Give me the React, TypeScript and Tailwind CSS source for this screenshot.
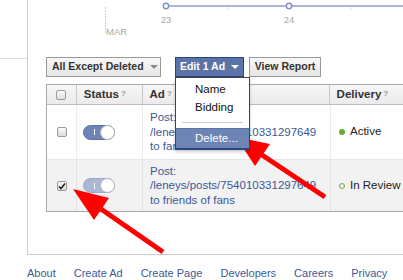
const font = { fontFamily: '"Liberation Sans", Arial, sans-serif' };

function Caret({ white }: { white?: boolean }) {
  return (
    <span
      className={`inline-block w-0 h-0 border-l-[4px] border-r-[4px] border-t-[4px] border-l-transparent border-r-transparent ${
        white ? 'border-t-white' : 'border-t-[#8a8a8a]'
      }`}
    />
  );
}

function Checkbox({ checked }: { checked?: boolean }) {
  return (
    <span className="w-[10px] h-[10px] rounded-[2px] border border-[#9a9a9a] bg-gradient-to-b from-[#fafafa] to-[#dcdcdc] flex items-center justify-center">
      {checked && (
        <svg width="8" height="8" viewBox="0 0 8 8">
          <path d="M1 4.5 L3 6.5 L7 1.5" fill="none" stroke="#222" strokeWidth="1.6" />
        </svg>
      )}
    </span>
  );
}

function Toggle({ faded }: { faded?: boolean }) {
  return (
    <span
      className={`relative w-[32px] h-[15px] rounded-full flex items-center ${
        faded ? 'bg-[#aab8d6] border border-[#9aa9cb]' : 'bg-[#6d84b4] border border-[#5b74a8]'
      }`}
    >
      <span className="ml-[10px] w-[1px] h-[6px] bg-white" />
      <span className="absolute right-[-1px] top-[-1px] w-[15px] h-[15px] rounded-full bg-white border border-[#b5b5b5]" />
    </span>
  );
}

function HeadCell({ label, w, last }: { label: string; w: string; last?: boolean }) {
  return (
    <div className={`${w} h-full flex items-center pl-[7px] ${last ? '' : 'border-r border-[#c8c8c8]'}`}>
      <span className="font-bold text-[11.5px] text-[#333]">{label}</span>
      <span className="text-[8px] text-[#999] self-start mt-[3px] ml-[2px] font-bold">?</span>
    </div>
  );
}

export default function App() {
  const links = ['About', 'Create Ad', 'Create Page', 'Developers', 'Careers', 'Privacy'];

  return (
    <div className="relative w-[403px] h-[280px] overflow-hidden bg-white" style={font}>
      <div className="flex">
        <div className="w-[27px] h-[59px] border-b border-[#dcdcdc] shrink-0" />
        <div className="w-[376px] h-[255px] border-l border-b border-[#cccccc] overflow-hidden shrink-0">
          {/* chart */}
          <svg width="376" height="57" className="block">
            <line x1="77.5" y1="7" x2="77.5" y2="34" stroke="#cfcfcf" strokeDasharray="2 1" />
            <text x="78" y="35" fontSize="9.5" fill="#a8a8a8" fontFamily="Liberation Sans, Arial, sans-serif">MAR</text>
            <line x1="138" y1="6" x2="376" y2="6" stroke="#8ea0c8" strokeWidth="1.5" />
            <line x1="200" y1="7" x2="200" y2="10" stroke="#dde2ee" />
            <line x1="323" y1="7" x2="323" y2="10" stroke="#dde2ee" />
            <circle cx="138" cy="6" r="2.7" fill="white" stroke="#7f93c0" strokeWidth="1.5" />
            <circle cx="261" cy="6" r="2.7" fill="white" stroke="#7f93c0" strokeWidth="1.5" />
            <text x="138" y="23" fontSize="9.5" fill="#a8a8a8" textAnchor="middle" fontFamily="Liberation Sans, Arial, sans-serif">23</text>
            <text x="261" y="23" fontSize="9.5" fill="#a8a8a8" textAnchor="middle" fontFamily="Liberation Sans, Arial, sans-serif">24</text>
          </svg>

          <div className="pl-[18px]">
            {/* toolbar */}
            <div className="flex items-start h-[20px]">
              <button className="w-[115px] h-[20px] border border-[#999] bg-gradient-to-b from-[#f7f7f7] to-[#e6e6e6] flex items-center pl-[5px] gap-[6px] text-[10.5px] font-bold text-[#333] whitespace-nowrap">
                All Except Deleted <Caret />
              </button>
              <div className="relative ml-[14px] z-10">
                <button className="w-[69px] h-[20px] border border-[#29447e] bg-[#5b74a8] flex items-center justify-center gap-[6px] text-[10.5px] font-bold text-white whitespace-nowrap">
                  Edit 1 Ad <Caret white />
                </button>
                <div className="absolute left-0 top-[20px] w-[75px] bg-white border border-[#444] border-b-[#29447e] border-b-2 shadow-[0_2px_3px_rgba(0,0,0,0.2)]">
                  <div className="pl-[19px] pt-[2px] text-[11.5px] text-[#111] leading-[18px]">Name</div>
                  <div className="pl-[19px] text-[11.5px] text-[#111] leading-[18px]">Bidding</div>
                  <div className="mx-[6px] mt-[6px] mb-[5px] h-px bg-[#ccc]" />
                  <div className="h-[20px] bg-[#6d84b4] border-t border-[#5b74a8] pl-[19px] text-[11.5px] text-white flex items-center">
                    Delete...
                  </div>
                </div>
              </div>
              <button className="ml-[5px] w-[72px] h-[20px] border border-[#999] bg-gradient-to-b from-[#f7f7f7] to-[#e6e6e6] flex items-center justify-center text-[10.5px] font-bold text-[#333] whitespace-nowrap">
                View Report
              </button>
            </div>

            {/* table */}
            <div className="mt-[7px] w-[400px] border border-[#a9a9a9]">
              <div className="h-[20px] flex bg-gradient-to-b from-[#f6f6f6] to-[#ebebeb] border-b border-[#bdbdbd]">
                <div className="w-[30px] h-full flex items-center justify-center border-r border-[#c8c8c8]">
                  <Checkbox />
                </div>
                <HeadCell label="Status" w="w-[66px]" />
                <HeadCell label="Ad" w="w-[188px]" />
                <HeadCell label="Delivery" w="w-[116px]" last />
              </div>

              <div className="h-[55px] flex bg-white border-b border-[#e6e6e6]">
                <div className="w-[30px] flex items-center justify-center border-r border-[#ececec]">
                  <Checkbox />
                </div>
                <div className="w-[66px] flex items-center pl-[6px] border-r border-[#ececec]">
                  <Toggle />
                </div>
                <div className="w-[188px] flex flex-col justify-center pl-[7px] text-[11.5px] leading-[14.5px] text-[#3b5998] border-r border-[#ececec]">
                  <span>Post:</span>
                  <span>/leneys/posts/754010331297649</span>
                  <span>to fans</span>
                </div>
                <div className="flex items-center pl-[8px] gap-[5px] text-[11.5px] text-[#222]">
                  <span className="w-[6px] h-[6px] rounded-full bg-[#6aa83a]" />
                  Active
                </div>
              </div>

              <div className="h-[51px] flex bg-[#f2f2f2]">
                <div className="w-[30px] flex items-center justify-center border-r border-[#e2e2e2]">
                  <Checkbox checked />
                </div>
                <div className="w-[66px] flex items-center pl-[6px] border-r border-[#e2e2e2]">
                  <Toggle faded />
                </div>
                <div className="w-[188px] flex flex-col justify-center pl-[7px] text-[11.5px] leading-[14.5px] text-[#3b5998] border-r border-[#e2e2e2]">
                  <span>Post:</span>
                  <span>/leneys/posts/754010331297649</span>
                  <span>to friends of fans</span>
                </div>
                <div className="flex items-center pl-[8px] gap-[5px] text-[11.5px] text-[#222]">
                  <span className="w-[6px] h-[6px] rounded-full border border-[#6aa83a]" />
                  In Review
                </div>
              </div>
            </div>
          </div>
        </div>
      </div>

      {/* footer */}
      <div className="flex gap-[18px] pl-[27px] pt-[10px] text-[11px] text-[#3b5998]">
        {links.map((l) => (
          <span key={l}>{l}</span>
        ))}
      </div>

      {/* annotation arrows */}
      <svg className="absolute left-0 top-0 pointer-events-none" width="403" height="280">
        <line x1="325" y1="197" x2="262" y2="155" stroke="#ff0000" strokeWidth="5" />
        <polygon points="236,137 270,144 255,166" fill="#ff0000" />
        <line x1="163" y1="252" x2="101" y2="209" stroke="#ff0000" strokeWidth="5" />
        <polygon points="73,189 109,198 94,220" fill="#ff0000" />
      </svg>
    </div>
  );
}
